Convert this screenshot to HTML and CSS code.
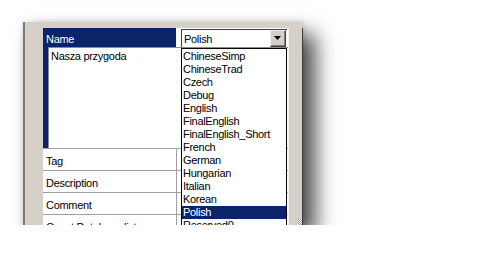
FILE: index.html
```html
<!DOCTYPE html>
<html>
<head>
<meta charset="utf-8">
<link rel="stylesheet" href="styles.css">
</head>
<body>
<div class="window">
  <div class="content">
    <div class="row name-row">
      <div class="label sel">Name</div>
      <div class="value">
        <div class="combo">
          <span class="combo-text">Polish</span>
          <div class="btn"><svg width="7" height="4" viewBox="0 0 7 4"><path d="M0 0H7L3.5 4Z" fill="#000"/></svg></div>
        </div>
      </div>
    </div>
    <div class="editor"><div class="edit">Nasza przygoda</div></div>
    <div class="row prop"><div class="label">Tag</div><div class="value"></div></div>
    <div class="row prop"><div class="label">Description</div><div class="value"></div></div>
    <div class="row prop"><div class="label">Comment</div><div class="value"></div></div>
    <div class="row prop"><div class="label">Quest Database list</div><div class="value"></div></div>
    <ul class="list">
      <li>ChineseSimp</li>
      <li>ChineseTrad</li>
      <li>Czech</li>
      <li>Debug</li>
      <li>English</li>
      <li>FinalEnglish</li>
      <li>FinalEnglish_Short</li>
      <li>French</li>
      <li>German</li>
      <li>Hungarian</li>
      <li>Italian</li>
      <li>Korean</li>
      <li class="hl">Polish</li>
      <li>Reserved0</li>
    </ul>
  </div>
  <div class="strip"><div class="grip"></div></div>
</div>
</body>
</html>
```
FILE: styles.css
```css
html, body {
  margin: 0;
  padding: 0;
  background: #fff;
}
body {
  font-family: "Liberation Sans", Arial, sans-serif;
  font-size: 11px;
  letter-spacing: -0.3px;
  color: #000;
}
.window {
  box-sizing: border-box;
  margin: 22px 0 0 23px;
  width: 280px;
  height: 203px;
  display: flex;
  background: #d4d0c8;
  border-left: 2px solid #7a7a7a;
  padding: 6px 0 0 18px;
  overflow: hidden;
  box-shadow: 12px 12px 20px rgba(0,0,0,0.72), 0 0 5px rgba(0,0,0,0.14);
}
.content {
  position: relative;
  width: 245px;
  background: #fff;
  flex: none;
}
.strip {
  flex: 1;
  position: relative;
  border-left: 1px solid #f4f3ef;
  border-right: 1px solid #3c3c3c;
}
.grip {
  position: absolute;
  right: 0;
  bottom: 0;
  width: 4px;
  height: 6px;
  background: repeating-conic-gradient(#fff 0 25%, #999 0 50%) 0 0 / 2px 2px;
}
.row {
  display: flex;
}
.label {
  width: 133px;
  flex: none;
  padding-left: 3px;
  box-sizing: border-box;
  line-height: 13px;
  white-space: nowrap;
}
.value {
  flex: 1;
}
.name-row {
  height: 19px;
}
.name-row .label {
  padding-top: 5px;
}
.sel {
  background: #0a246a;
  color: #fff;
}
.name-row .value {
  padding: 1px 0 0 5px;
}
.combo {
  box-sizing: border-box;
  width: 106px;
  height: 18px;
  border-top: 1px solid #404040;
  border-left: 1px solid #404040;
  display: flex;
  align-items: flex-start;
}
.combo-text {
  flex: 1;
  padding: 3px 0 0 2px;
  line-height: 13px;
}
.btn {
  box-sizing: border-box;
  width: 16px;
  height: 17px;
  margin-right: 1px;
  background: #d4d0c8;
  border-top: 1px solid #f0efeb;
  border-left: 1px solid #f0efeb;
  border-right: 1px solid #404040;
  border-bottom: 1px solid #404040;
  box-shadow: inset -1px -1px 0 #808080;
  display: flex;
  align-items: center;
  justify-content: center;
}
.btn svg {
  display: block;
  margin: 0 1px 1px 0;
}
.editor {
  height: 101px;
  background: #0a246a;
  padding-left: 5px;
  box-sizing: border-box;
}
.edit {
  height: 100%;
  background: #fff;
  border-top: 1px solid #8a8a8a;
  border-left: 1px solid #8a8a8a;
  box-sizing: border-box;
  padding: 2px 0 0 2px;
  line-height: 13px;
}
.prop {
  height: 21px;
  border-top: 1px solid #a0a0a0;
}
.prop .label {
  padding-top: 6px;
  padding-left: 3px;
}
.prop .value {
  border-left: 1px solid #a0a0a0;
}
.list {
  position: absolute;
  left: 138px;
  top: 20px;
  width: 106px;
  height: 200px;
  margin: 0;
  padding: 1px 0 0;
  list-style: none;
  box-sizing: border-box;
  border: 1px solid #000;
  background: #fff;
}
.list li {
  height: 13px;
  line-height: 13px;
  padding-left: 1px;
  white-space: nowrap;
}
.list li.hl {
  background: #0a246a;
  color: #fff;
}
```
